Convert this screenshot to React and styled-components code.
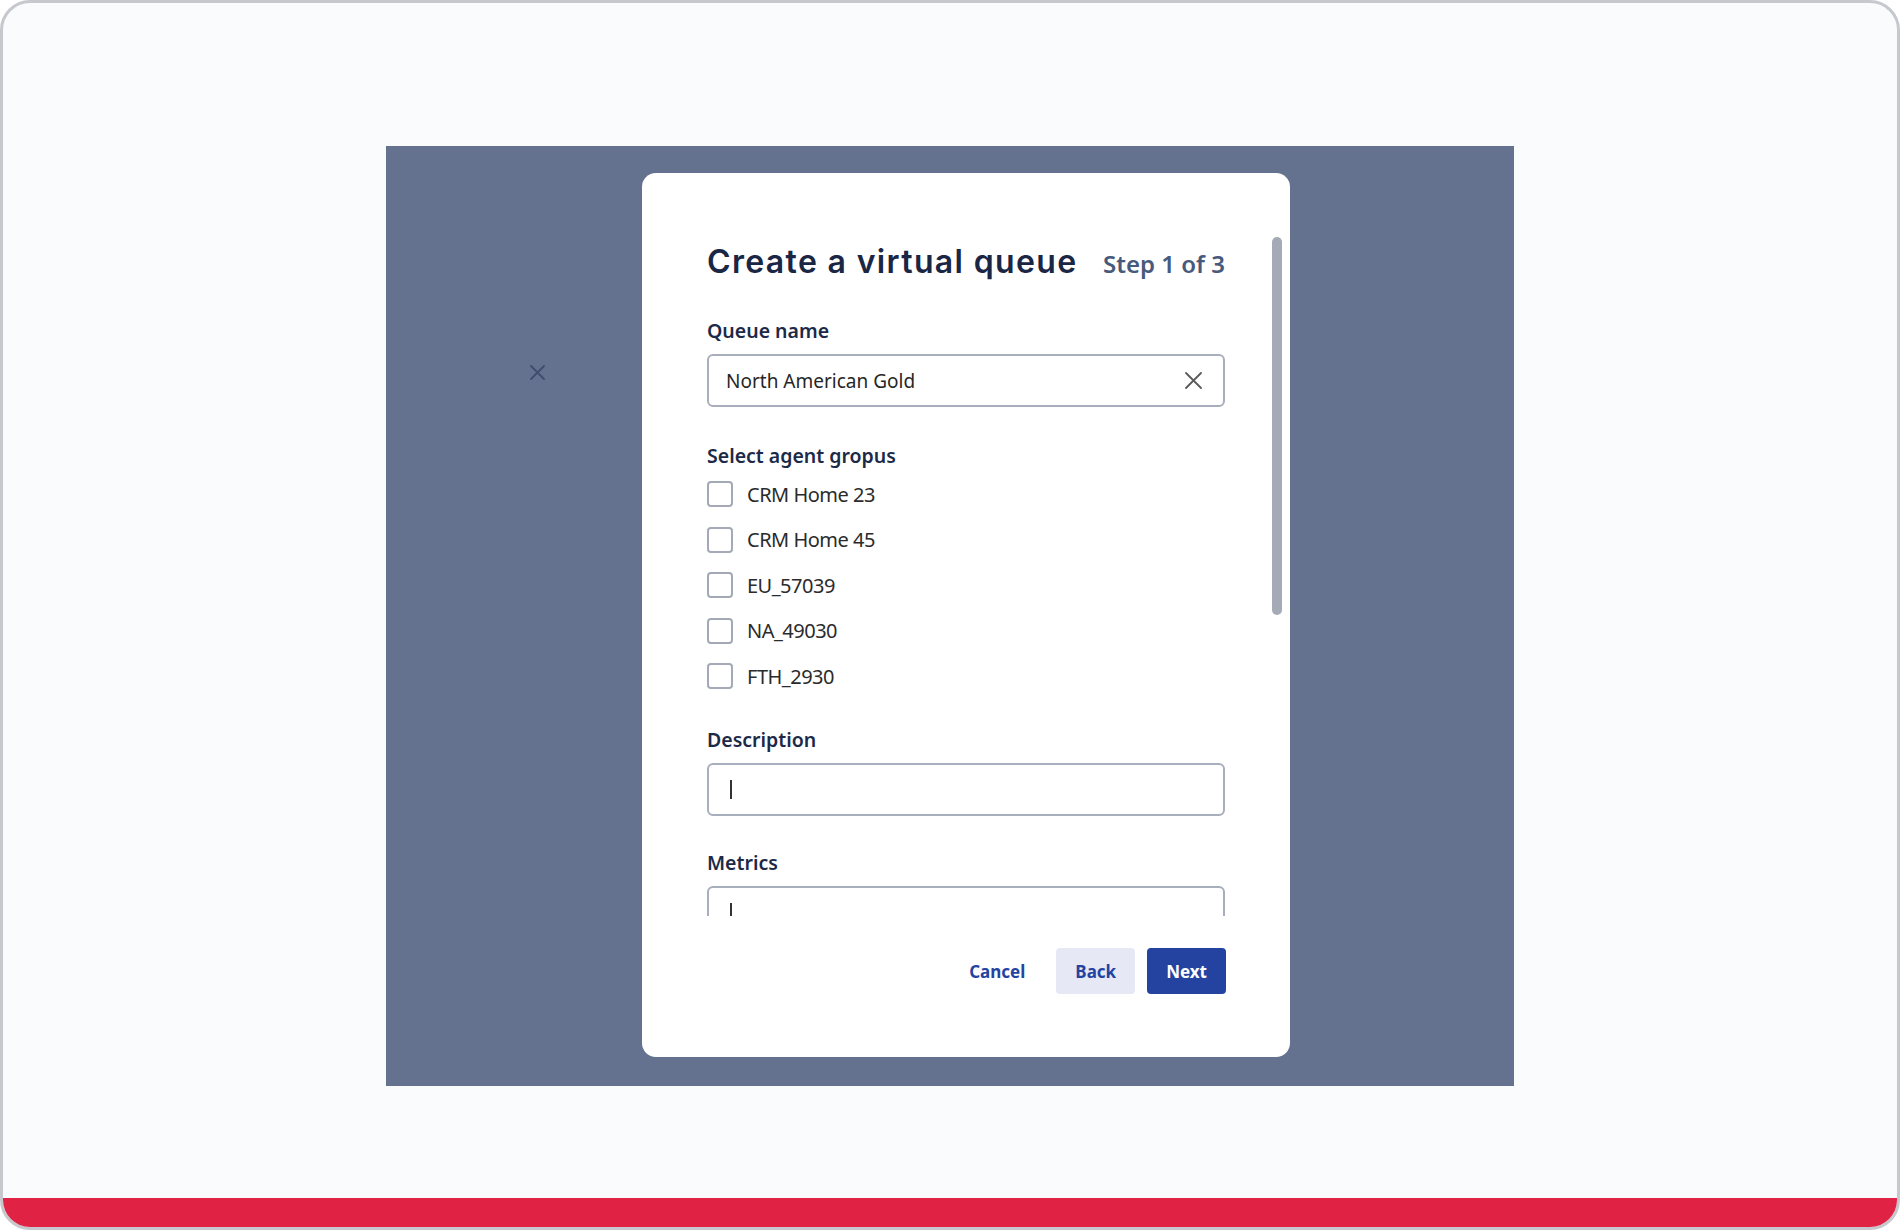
import React from 'react';
import styled, { createGlobalStyle } from 'styled-components';

const GlobalStyle = createGlobalStyle`
    html, body {
        margin: 0;
        padding: 0;
        background: #ffffff;
    }
    body {
        font-family: "Noto Sans", "Open Sans", sans-serif;
    }
    * {
        box-sizing: border-box;
    }
`;

const Frame = styled.div`
    width: 1900px;
    height: 1230px;
    border: 3px solid #c6c8ce;
    border-radius: 30px;
    background: #fafbfd;
    overflow: hidden;
    display: flex;
    flex-direction: column;
`;

const Stage = styled.main`
    flex: 1;
    padding-top: 143px;
    display: flex;
    justify-content: center;
    align-items: flex-start;
`;

const BottomBar = styled.div`
    height: 29px;
    background: #e02244;
`;

const Overlay = styled.section`
    width: 1128px;
    height: 940px;
    background: #64728f;
    display: flex;
    align-items: flex-start;
    padding-top: 27px;
`;

const CloseSlot = styled.div`
    width: 256px;
    padding: 192px 0 0 144px;
    svg {
        display: block;
    }
`;

const Modal = styled.div`
    position: relative;
    width: 648px;
    height: 884px;
    background: #ffffff;
    border-radius: 14px;
    display: flex;
    flex-direction: column;
`;

const ScrollThumb = styled.div`
    position: absolute;
    right: 8px;
    top: 64px;
    width: 10px;
    height: 378px;
    border-radius: 5px;
    background: #a4aab6;
`;

const Body = styled.div`
    height: 743px;
    overflow: hidden;
    padding: 69px 65px 0;
    display: flex;
    flex-direction: column;
`;

const Header = styled.div`
    display: flex;
    justify-content: space-between;
    align-items: baseline;
    h1 {
        margin: 0;
        font-family: Inter, "Noto Sans", sans-serif;
        font-weight: 600;
        font-size: 32px;
        line-height: 40px;
        color: #1a2644;
        letter-spacing: 1.35px;
    }
    span {
        font-weight: 600;
        font-size: 24px;
        color: #475a7c;
    }
`;

const Field = styled.div`
    display: flex;
    flex-direction: column;
    margin-top: ${p => p.$top}px;
    gap: ${p => p.$gap || 11}px;
`;

const Label = styled.label`
    font-weight: 600;
    font-size: 19.5px;
    line-height: 24px;
    color: #1c2a48;
`;

const TextBox = styled.div`
    height: 53px;
    flex-shrink: 0;
    border: 2px solid #a8aebb;
    border-radius: 6px;
    display: flex;
    align-items: center;
    justify-content: space-between;
    padding: 0 21px 0 17px;
    font-size: 19px;
    color: #262626;
    svg {
        display: block;
    }
`;

const Caret = styled.span`
    display: block;
    width: 1.5px;
    height: 19px;
    margin-left: 4px;
    background: #333333;
`;

const CheckList = styled.div`
    display: flex;
    flex-direction: column;
    gap: 19.5px;
`;

const CheckRow = styled.div`
    display: flex;
    align-items: center;
    gap: 14px;
    height: 26px;
    font-size: 20px;
    letter-spacing: -0.5px;
    color: #2b2b2b;
`;

const Box = styled.span`
    width: 26px;
    height: 26px;
    border: 2px solid #a3a9b6;
    border-radius: 4px;
    background: #ffffff;
`;

const Footer = styled.div`
    display: flex;
    justify-content: flex-end;
    gap: 12px;
    padding: 32px 64px 63px 0;
`;

const Button = styled.button`
    height: 46px;
    padding: 0 19px;
    border: none;
    border-radius: 4px;
    font-family: "Noto Sans", sans-serif;
    font-weight: 700;
    font-size: 17px;
    background: ${p => p.$variant === 'primary' ? '#2443a1' : p.$variant === 'secondary' ? '#e6e8f6' : 'transparent'};
    color: ${p => p.$variant === 'primary' ? '#ffffff' : '#2443a1'};
`;

const Cross = ({ size, color, width }) => (
    <svg width={size} height={size} viewBox={`0 0 ${size} ${size}`}>
        <path d={`M1 1 L${size - 1} ${size - 1} M${size - 1} 1 L1 ${size - 1}`} stroke={color} strokeWidth={width} strokeLinecap="round" fill="none" />
    </svg>
);

const groups = ['CRM Home 23', 'CRM Home 45', 'EU_57039', 'NA_49030', 'FTH_2930'];

const App = () => {
    return (
        <>
            <GlobalStyle />
            <Frame>
                <Stage>
                    <Overlay>
                        <CloseSlot>
                            <Cross size={15} color="#3f4d6e" width={1.8} />
                        </CloseSlot>
                        <Modal>
                            <ScrollThumb />
                            <Body>
                                <Header>
                                    <h1>Create a virtual queue</h1>
                                    <span>Step 1 of 3</span>
                                </Header>
                                <Field $top={37}>
                                    <Label>Queue name</Label>
                                    <TextBox>
                                        North American Gold
                                        <Cross size={17} color="#5a5a5a" width={1.8} />
                                    </TextBox>
                                </Field>
                                <Field $top={37} $gap={13}>
                                    <Label>Select agent gropus</Label>
                                    <CheckList>
                                        {groups.map(g => (
                                            <CheckRow key={g}>
                                                <Box />
                                                {g}
                                            </CheckRow>
                                        ))}
                                    </CheckList>
                                </Field>
                                <Field $top={39}>
                                    <Label>Description</Label>
                                    <TextBox>
                                        <Caret />
                                    </TextBox>
                                </Field>
                                <Field $top={35}>
                                    <Label>Metrics</Label>
                                    <TextBox>
                                        <Caret />
                                    </TextBox>
                                </Field>
                            </Body>
                            <Footer>
                                <Button>Cancel</Button>
                                <Button $variant="secondary">Back</Button>
                                <Button $variant="primary">Next</Button>
                            </Footer>
                        </Modal>
                    </Overlay>
                </Stage>
                <BottomBar />
            </Frame>
        </>
    );
};

export default App;
